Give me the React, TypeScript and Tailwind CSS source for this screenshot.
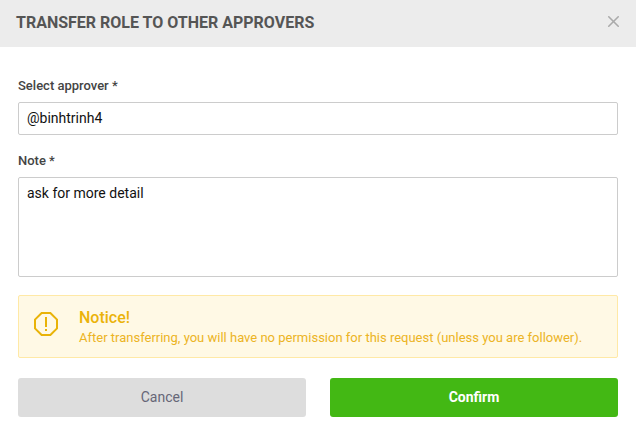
import { X } from "lucide-react";

export default function App() {
  return (
    <div className="w-[636px] h-[439px] bg-white font-['Roboto',sans-serif] overflow-hidden">
      <div className="h-[47px] bg-[#ececec] flex items-center justify-between pl-4 pr-[13px] pb-[2px]">
        <h2 className="text-base font-bold text-[#555] leading-none">
          TRANSFER ROLE TO OTHER APPROVERS
        </h2>
        <X className="w-[19px] h-[19px] mb-[2px] text-[#aaa]" strokeWidth={2} />
      </div>

      <div className="px-[18px] pt-[31px]">
        <label className="block text-[13px] font-medium text-[#444] leading-4 mb-2">
          Select approver *
        </label>
        <input
          readOnly
          value="@binhtrinh4"
          className="block w-full h-[33px] border border-[#ccc] rounded-[2px] px-2 pb-px text-sm text-[#111] outline-none"
        />

        <label className="block text-[13px] font-medium text-[#444] leading-4 mt-[18px] mb-2">
          Note *
        </label>
        <textarea
          readOnly
          value="ask for more detail"
          className="block w-full h-[100px] border border-[#ccc] rounded-[2px] px-2 pt-[7px] pb-[6px] text-sm leading-4 text-[#111] outline-none resize-none"
        />

        <div className="mt-[18px] h-[63px] flex items-start bg-[#fff9e5] border border-[#ffe9a6] rounded-[2px] pl-[15px] pt-3">
          <svg className="mt-1 shrink-0" width="24" height="24" viewBox="0 0 24 24" fill="none" stroke="#e9b308" strokeWidth="2">
            <path d="M7.6 1h8.8L23 7.6v8.8L16.4 23H7.6L1 16.4V7.6z" />
            <path d="M12 5v10" />
            <path d="M12 17v2" />
          </svg>
          <div className="ml-[21px]">
            <div className="text-base font-medium leading-5 text-[#ebb30a]">Notice!</div>
            <div className="text-[13px] leading-[19px] text-[#ecb424]">
              After transferring, you will have no permission for this request (unless you are follower).
            </div>
          </div>
        </div>

        <div className="mt-5 flex gap-6">
          <button className="flex-1 h-[39px] pb-px bg-[#ddd] rounded-[3px] text-sm text-[#667]">Cancel</button>
          <button className="flex-1 h-[39px] pb-px bg-[#43b814] rounded-[3px] text-sm font-bold text-white">Confirm</button>
        </div>
      </div>
    </div>
  );
}
